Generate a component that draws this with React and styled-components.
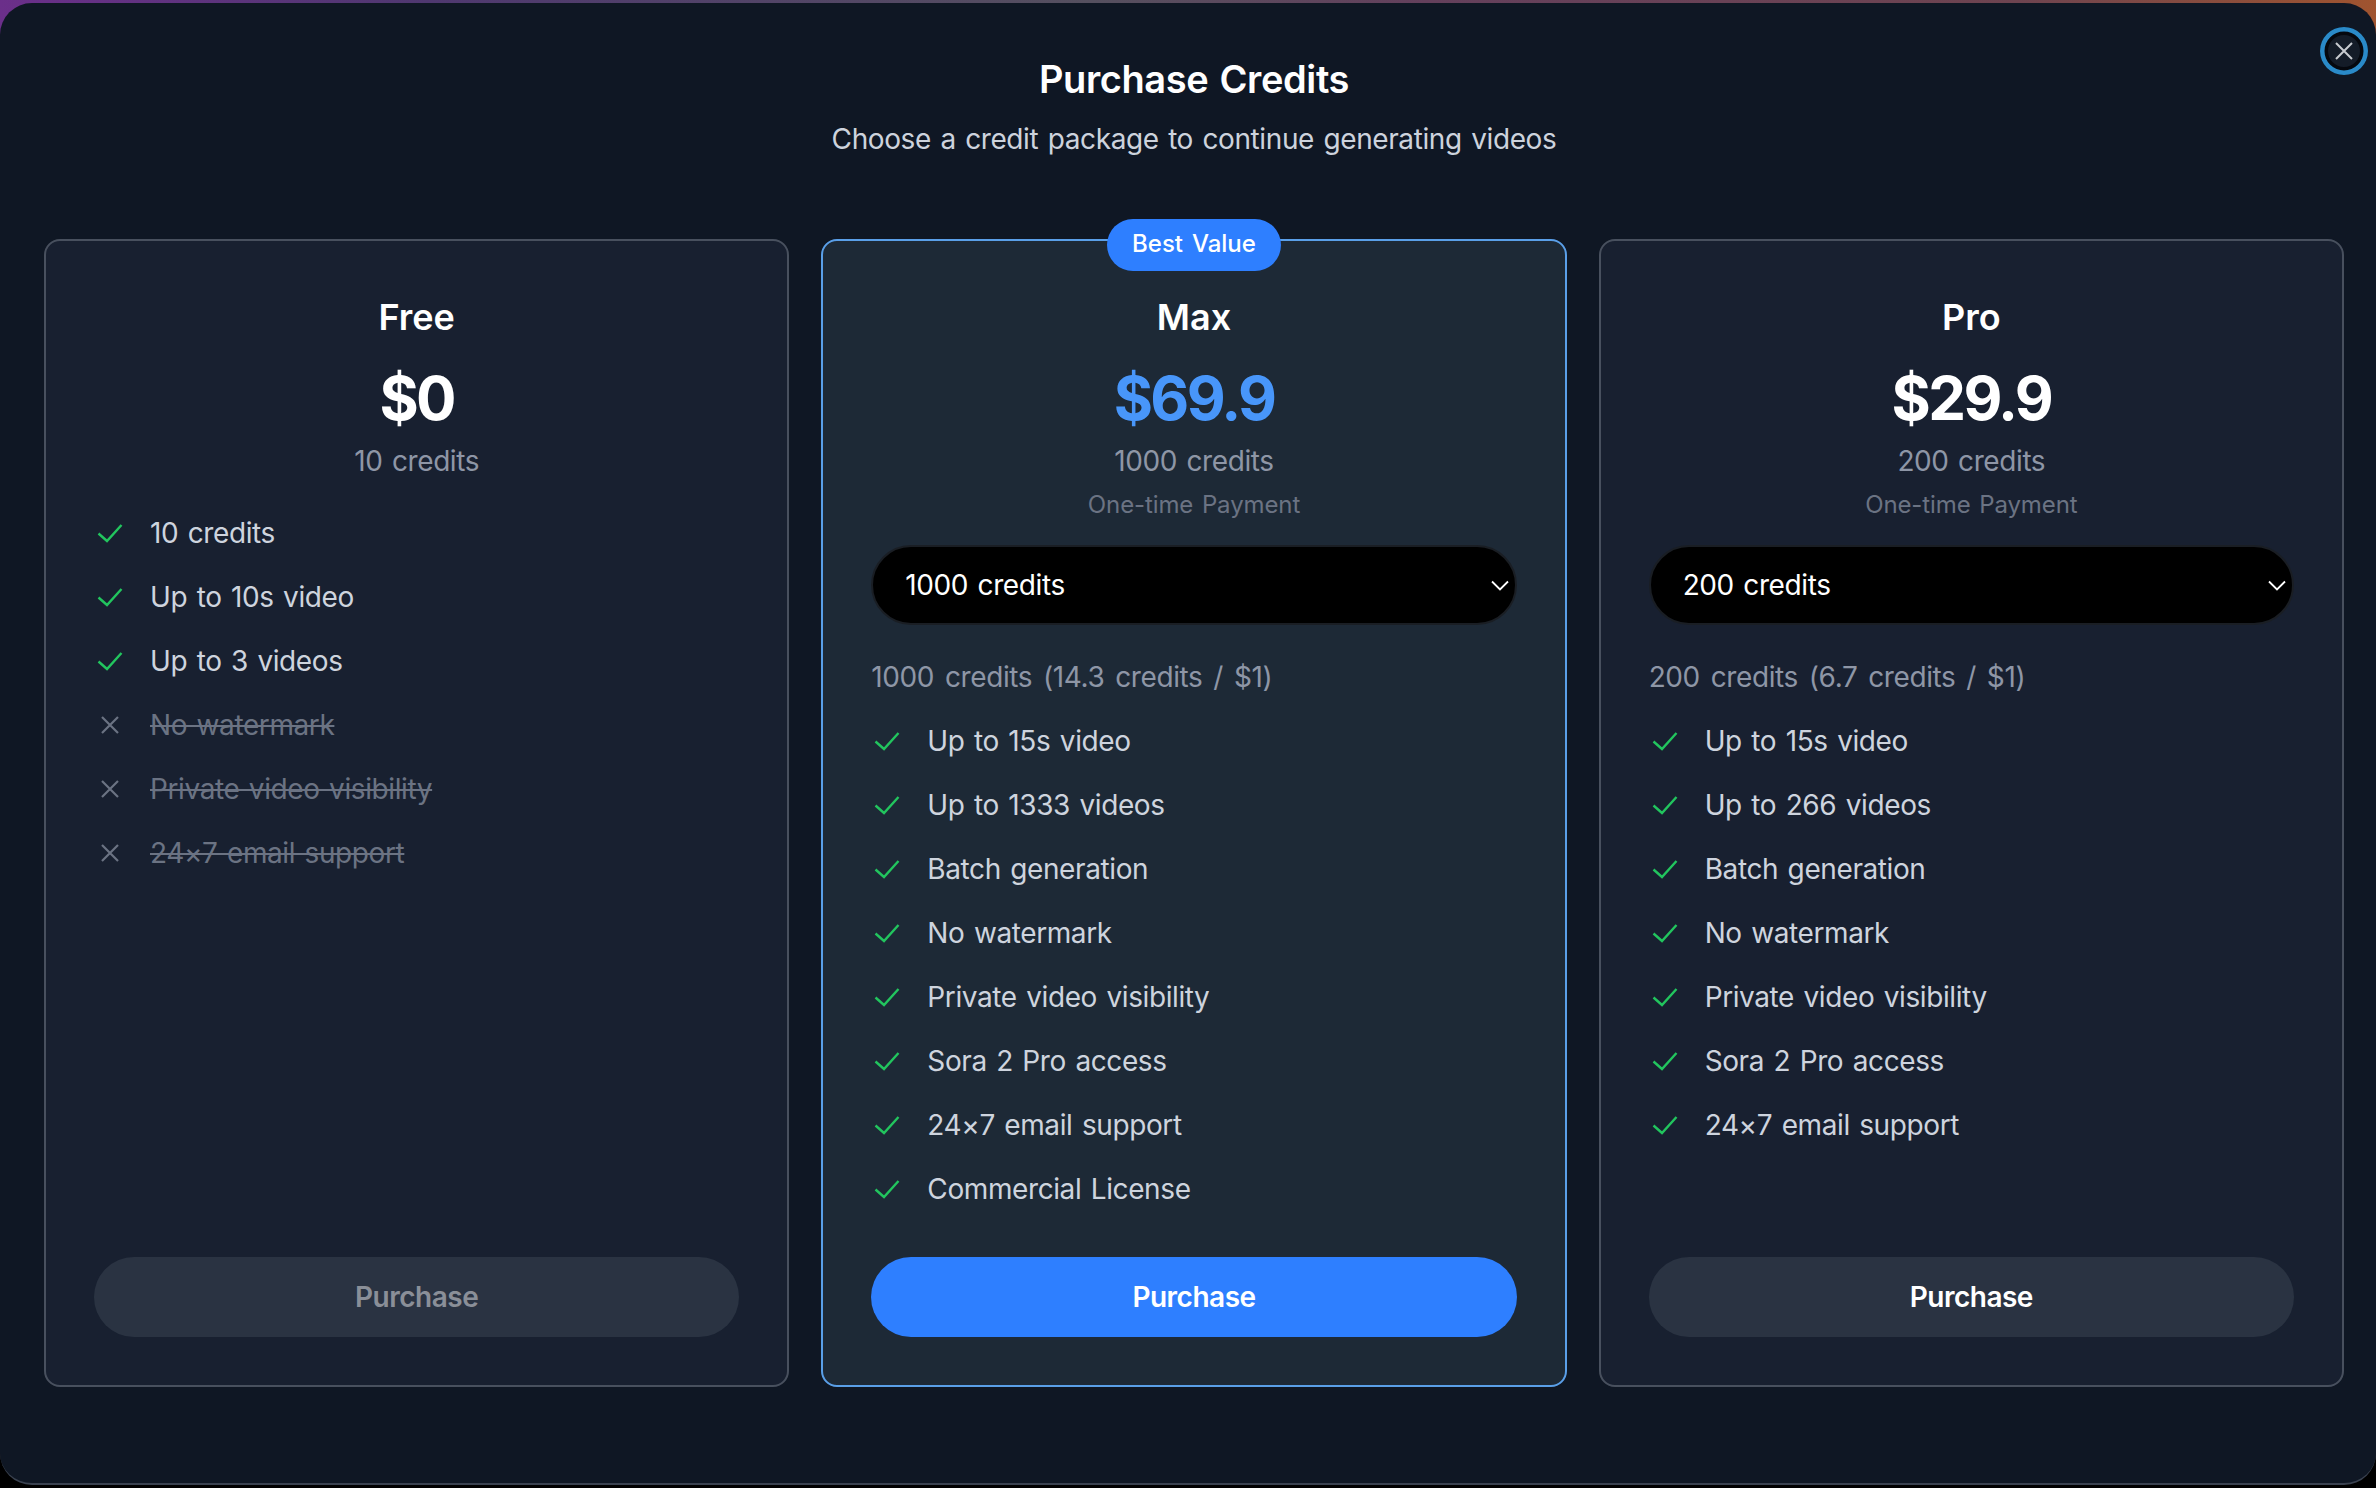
import React from "react";
import styled, { createGlobalStyle } from "styled-components";

const Global = createGlobalStyle`
  html, body { margin: 0; padding: 0; background: #000; }
  body {
    width: 2376px; height: 1488px; overflow: hidden; font-family: Inter, "Noto Sans", sans-serif;
    letter-spacing: -0.4px; word-spacing: 2px;
  }
`;
const Page = styled.div`
  width: 2376px; height: 1488px; padding-top: 3px; box-sizing: border-box;
  background: linear-gradient(90deg, #6b2f8a 0%, #4f3870 18%, #55505f 46%, #64405c 60%, #6e4450 85%, #a0542f 100%) top / 100% 40px no-repeat, #000;
`;
const Modal = styled.div`
  position: relative; box-sizing: border-box; width: 100%; height: 1482px;
  background: #0f1724; border-bottom: 2px solid #3a4250; border-radius: 32px;
  padding: 52px 32px 0 44px;
`;
const Close = styled.button`
  position: absolute; top: 24px; right: 8px; width: 48px; height: 48px; padding: 0;
  box-sizing: border-box; border-radius: 50%; background: #141c28; border: 0;
  box-shadow: inset 0 0 0 4.5px #2a8ac8, inset 0 0 0 8px #05080e;
  display: flex; align-items: center; justify-content: center; color: #c8cbd0;
`;
const Title = styled.h1`
  margin: 0; text-align: center; font-size: 38px; line-height: 48px; font-weight: 600; color: #fff;
`;
const Sub = styled.p`
  margin: 12px 0 0; text-align: center; font-size: 28px; line-height: 48px; color: #cdd3dd;
`;
const Cards = styled.div`
  display: grid; grid-template-columns: repeat(3, 1fr); gap: 32px; margin-top: 76px;
`;
const Card = styled.section`
  position: relative; box-sizing: border-box; height: 1148px; border-radius: 16px;
  padding: 52px 48px 48px; display: flex; flex-direction: column;
  background: ${p => (p.$hi ? "#1d2936" : "#182030")};
  border: 2px solid ${p => (p.$hi ? "#5a9fe8" : "#48505e")};
`;
const Badge = styled.div`
  position: absolute; top: -22px; left: 50%; transform: translateX(-50%);
  box-sizing: border-box; height: 52px; width: 174px; padding-bottom: 3px; border-radius: 26px;
  background: #2e7fff; color: #fff;
  display: flex; align-items: center; justify-content: center; font-size: 24px; font-weight: 500;
  letter-spacing: 0; word-spacing: 2.5px;
`;
const Name = styled.h2`
  margin: 0; text-align: center; font-size: 36px; line-height: 48px; font-weight: 600; color: #fff;
  letter-spacing: 0;
`;
const Price = styled.div`
  margin-top: 25px; text-align: center; font-size: 60px; line-height: 64px; font-weight: 700;
  letter-spacing: -2.6px;
  color: ${p => (p.$hi ? "#4896fa" : "#fff")};
`;
const Credits = styled.div`
  margin-top: 11px; text-align: center; font-size: 28px; line-height: 40px; color: #8e96a6;
`;
const Once = styled.div`
  margin-top: 4px; text-align: center; font-size: 24px; line-height: 40px; color: #6b7383;
  letter-spacing: -0.1px;
`;
const Select = styled.div`
  margin-top: 20px; height: 80px; box-sizing: border-box; border-radius: 40px; background: #000;
  border: 2px solid #1a1e24; padding: 0 6px 0 32px; display: flex; align-items: center;
  justify-content: space-between; color: #fff; font-size: 28px;
`;
const Rate = styled.div`
  margin-top: 32px; font-size: 28px; line-height: 40px; color: #8e96a6; word-spacing: 3.4px;
`;
const Feats = styled.ul`
  list-style: none; margin: ${p => (p.$free ? "32px" : "24px")} 0 0; padding: 0;
  display: flex; flex-direction: column; gap: 24px; flex: 1;
`;
const Feat = styled.li`
  display: flex; align-items: center; gap: 28px; height: 40px; font-size: 28px;
  color: ${p => (p.$off ? "#6b7383" : "#ced4de")};
  text-decoration: ${p => (p.$off ? "line-through" : "none")};
`;
const IconBox = styled.span`
  width: 28px; height: 28px; flex: none; display: flex; color: ${p => (p.$off ? "#6b7383" : "#22c55e")};
`;
const Btn = styled.button`
  height: 80px; border: 0; border-radius: 40px; font: inherit; font-size: 28px; font-weight: 600;
  letter-spacing: -0.5px;
  background: ${p => (p.$v === "primary" ? "#2e7fff" : "#2a3342")};
  color: ${p => (p.$v === "off" ? "#8a8f98" : "#fff")};
`;

const Check = () => (
  <svg width="28" height="28" viewBox="0 0 28 28" fill="none" stroke="currentColor" strokeWidth="2.4" style={{ overflow: "visible" }}>
    <path d="M4.5 14.5l8.5 7.5L27.5 6" />
  </svg>
);
const Cross = () => (
  <svg width="28" height="28" viewBox="0 0 28 28" fill="none" stroke="currentColor" strokeWidth="2.2">
    <path d="M8 6l16 16M24 6L8 22" />
  </svg>
);
const Chev = () => (
  <svg width="18" height="11" viewBox="0 0 18 11" fill="none" stroke="currentColor" strokeWidth="1.8">
    <path d="M1 1.5l8 8 8-8" />
  </svg>
);
const Feature = ({ off, children }) => (
  <Feat $off={off}>
    <IconBox $off={off}>{off ? <Cross /> : <Check />}</IconBox>
    <span>{children}</span>
  </Feat>
);

const paid = ["Batch generation", "No watermark", "Private video visibility", "Sora 2 Pro access", "24×7 email support"];

export default function App() {
  return (
    <Page>
      <Global />
      <Modal>
        <Close aria-label="Close">
          <svg width="20" height="20" viewBox="0 0 20 20" fill="none" stroke="currentColor" strokeWidth="2">
            <path d="M2 2l16 16M18 2L2 18" />
          </svg>
        </Close>
        <Title>Purchase Credits</Title>
        <Sub>Choose a credit package to continue generating videos</Sub>
        <Cards>
          <Card>
            <Name>Free</Name>
            <Price>$0</Price>
            <Credits>10 credits</Credits>
            <Feats $free>
              <Feature>10 credits</Feature>
              <Feature>Up to 10s video</Feature>
              <Feature>Up to 3 videos</Feature>
              <Feature off>No watermark</Feature>
              <Feature off>Private video visibility</Feature>
              <Feature off>24×7 email support</Feature>
            </Feats>
            <Btn $v="off">Purchase</Btn>
          </Card>
          <Card $hi>
            <Badge>Best Value</Badge>
            <Name>Max</Name>
            <Price $hi>$69.9</Price>
            <Credits>1000 credits</Credits>
            <Once>One-time Payment</Once>
            <Select>1000 credits<Chev /></Select>
            <Rate>1000 credits (14.3 credits / $1)</Rate>
            <Feats>
              <Feature>Up to 15s video</Feature>
              <Feature>Up to 1333 videos</Feature>
              {paid.map(t => <Feature key={t}>{t}</Feature>)}
              <Feature>Commercial License</Feature>
            </Feats>
            <Btn $v="primary">Purchase</Btn>
          </Card>
          <Card>
            <Name>Pro</Name>
            <Price>$29.9</Price>
            <Credits>200 credits</Credits>
            <Once>One-time Payment</Once>
            <Select>200 credits<Chev /></Select>
            <Rate>200 credits (6.7 credits / $1)</Rate>
            <Feats>
              <Feature>Up to 15s video</Feature>
              <Feature>Up to 266 videos</Feature>
              {paid.map(t => <Feature key={t}>{t}</Feature>)}
            </Feats>
            <Btn>Purchase</Btn>
          </Card>
        </Cards>
      </Modal>
    </Page>
  );
}
